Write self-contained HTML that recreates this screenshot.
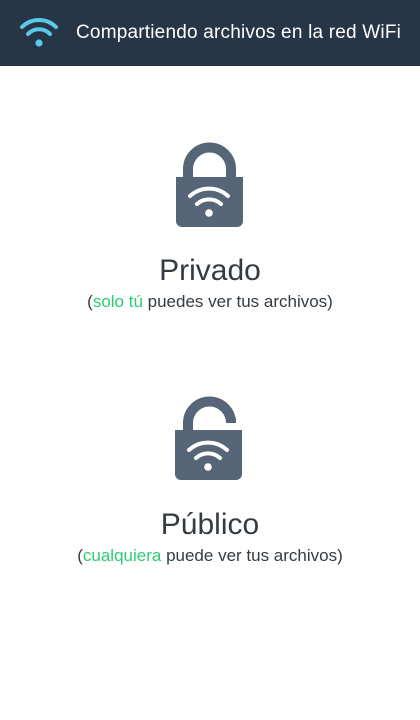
<!DOCTYPE html>
<html><head><meta charset="utf-8"><style>
body{margin:0;width:420px;height:720px;background:#fff;font-family:"Liberation Sans",sans-serif;position:relative;overflow:hidden}
.hd{position:absolute;left:0;top:0;width:420px;height:66px;background:#273646}
.hd span{position:absolute;left:76px;top:22px;color:#fff;font-size:19px;line-height:22px;letter-spacing:0.2px}
.t{position:absolute;left:0;width:420px;text-align:center;color:#343b42}
.big{font-size:30px;line-height:34px}
.sm{font-size:17px;line-height:20px}
.g{color:#2ecc71}
svg{position:absolute}
</style></head><body>
<div class="hd">
<svg width="60" height="66" style="left:0;top:0"><g fill="none" stroke="#5ac8e8" stroke-width="4" stroke-linecap="round">
<path d="M22 27 A24 24 0 0 1 56 27"/><path d="M28 34 A15 15 0 0 1 50 34"/></g>
<circle cx="39" cy="43" r="3.6" fill="#5ac8e8"/></svg>
<span>Compartiendo archivos en la red WiFi</span></div>

<svg width="420" height="720" style="left:0;top:0">
<g fill="none" stroke="#566577" stroke-width="10">
<path d="M188 178 V169 A21 21 0 0 1 231 169 V178"/>
<path d="M188 431 V423 A21 21 0 0 1 231 423 V418"/>
</g>
<path d="M176 177 H243 V221 A6 6 0 0 1 237 227 H182 A6 6 0 0 1 176 221 Z" fill="#566577"/>
<path d="M175 430 H242 V474 A6 6 0 0 1 236 480 H181 A6 6 0 0 1 175 474 Z" fill="#566577"/>
<g fill="none" stroke="#fff" stroke-width="4" stroke-linecap="round">
<path d="M190 196 A28 28 0 0 1 228 196"/><path d="M197 204 A18 18 0 0 1 221 204"/>
<path d="M189 450 A28 28 0 0 1 227 450"/><path d="M196 458 A18 18 0 0 1 220 458"/>
</g>
<circle cx="209" cy="213" r="3.8" fill="#fff"/>
<circle cx="208" cy="467" r="3.8" fill="#fff"/>
</svg>

<div class="t big" style="top:254px">Privado</div>
<div class="t sm" style="top:292px">(<span class="g">solo tú</span> puedes ver tus archivos)</div>
<div class="t big" style="top:508px">Público</div>
<div class="t sm" style="top:546px">(<span class="g">cualquiera</span> puede ver tus archivos)</div>
</body></html>
